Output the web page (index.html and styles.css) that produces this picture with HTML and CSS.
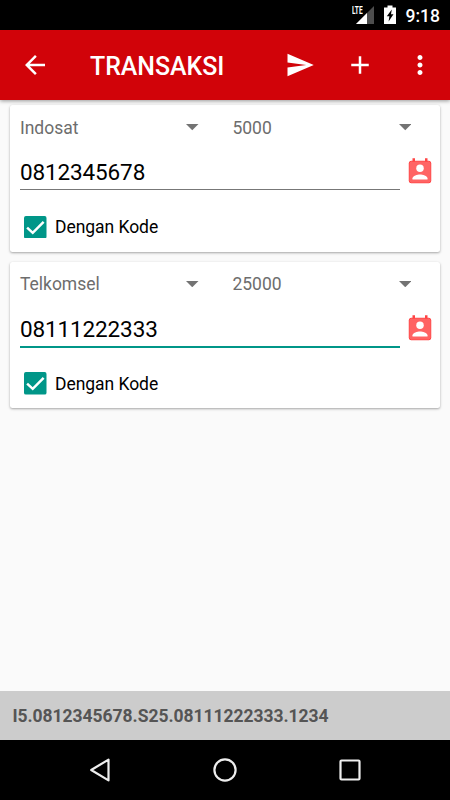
FILE: index.html
```html
<!DOCTYPE html>
<html lang="id">
<head>
<meta charset="utf-8">
<title>Transaksi</title>
<link rel="stylesheet" href="styles.css">
</head>
<body>
<div class="screen">
  <div class="status">
    <svg class="signal" width="24" height="20" viewBox="0 0 24 20"><path d="M22 1V19H4z" fill="#4d4d4d"/><path d="M15 8V19H4z" fill="#fff"/></svg>
    <span class="lte">LTE</span>
    <svg class="battery" width="12" height="19" viewBox="0 0 12 19"><path d="M3.5 0.500h5v2H12v16.500H0V2.500h3.500z" fill="#fff"/><path d="M7.800 4.500L2.800 11.300H5.400L4.600 16.500L9.500 9.300H7z" fill="#000"/></svg>
    <span class="time">9:18</span>
  </div>
  <header class="appbar">
    <svg class="icon" viewBox="0 0 24 24"><path d="M20 11H7.830l5.590-5.590L12 4l-8 8 8 8 1.410-1.410L7.830 13H20v-2z"/></svg>
    <h1 class="title">TRANSAKSI</h1>
    <div class="actions">
      <svg class="icon" viewBox="0 0 24 24"><path d="M2.010 21L23 12 2.010 3 2 10l15 2-15 2z"/></svg>
      <svg class="icon" viewBox="0 0 24 24"><path d="M19 13h-6v6h-2v-6H5v-2h6V5h2v6h6v2z"/></svg>
      <svg class="icon" viewBox="0 0 24 24"><path d="M12 8c1.100 0 2-.9 2-2s-.9-2-2-2-2 .9-2 2 .9 2 2 2zm0 2c-1.100 0-2 .9-2 2s.9 2 2 2 2-.9 2-2-.9-2-2-2zm0 6c-1.100 0-2 .9-2 2s.9 2 2 2 2-.9 2-2-.9-2-2-2z"/></svg>
    </div>
  </header>
  <main class="content">
    <section class="card">
      <div class="selects">
        <div class="select"><span>Indosat</span><svg class="caret" viewBox="0 0 12.500 6.250"><path d="M0 0h12.500L6.250 6.250z"/></svg></div>
        <div class="select"><span>5000</span><svg class="caret" viewBox="0 0 12.500 6.250"><path d="M0 0h12.500L6.250 6.250z"/></svg></div>
      </div>
      <div class="phone">
        <div class="field">0812345678</div>
        <svg class="contact" viewBox="0 0 24 24"><path class="tabs" d="M6 1h2v3H6zM16 1h2v3h-2z"/><rect class="page" x="3.400" y="3.400" width="17.200" height="17.200" rx="1.500"/><circle cx="12" cy="9" r="3"/><path d="M18 18H6v-1c0-2 4-3.100 6-3.100s6 1.100 6 3.100z"/></svg>
      </div>
      <div class="check"><svg class="box" viewBox="0 0 18 18"><rect width="18" height="18" rx="1.500"/><path d="M2.500 9.300L7 13.500 15.700 4.700"/></svg><span>Dengan Kode</span></div>
    </section>
    <section class="card focused">
      <div class="selects">
        <div class="select"><span>Telkomsel</span><svg class="caret" viewBox="0 0 12.500 6.250"><path d="M0 0h12.500L6.250 6.250z"/></svg></div>
        <div class="select"><span>25000</span><svg class="caret" viewBox="0 0 12.500 6.250"><path d="M0 0h12.500L6.250 6.250z"/></svg></div>
      </div>
      <div class="phone">
        <div class="field">08111222333</div>
        <svg class="contact" viewBox="0 0 24 24"><path class="tabs" d="M6 1h2v3H6zM16 1h2v3h-2z"/><rect class="page" x="3.400" y="3.400" width="17.200" height="17.200" rx="1.500"/><circle cx="12" cy="9" r="3"/><path d="M18 18H6v-1c0-2 4-3.100 6-3.100s6 1.100 6 3.100z"/></svg>
      </div>
      <div class="check"><svg class="box" viewBox="0 0 18 18"><rect width="18" height="18" rx="1.500"/><path d="M2.500 9.300L7 13.500 15.700 4.700"/></svg><span>Dengan Kode</span></div>
    </section>
  </main>
  <div class="preview">I5.0812345678.S25.08111222333.1234</div>
  <nav class="navbar">
    <svg viewBox="0 0 30 30"><path d="M23.500 4.600v20.800L6.200 15z"/></svg>
    <svg viewBox="0 0 30 30"><circle cx="15" cy="15" r="10.600"/></svg>
    <svg viewBox="0 0 30 30"><rect x="5.500" y="5.500" width="19" height="19" rx="1"/></svg>
  </nav>
</div>
</body>
</html>
```
FILE: styles.css
```css
* { box-sizing: border-box; }
body { margin: 0; font-family: Roboto, "Liberation Sans", sans-serif; }
svg { display: block; flex: none; }
.screen { width: 450px; height: 800px; display: flex; flex-direction: column; background: #fafafa; overflow: hidden; }
.status { height: 30px; flex: none; background: #000; color: #fff; display: flex; justify-content: flex-end; padding-right: 10px; position: relative; }
.signal { margin: 5px 8px 0 0; }
.lte { position: absolute; left: 352px; top: 5px; font: 700 11px/11px Roboto, sans-serif; transform: scaleX(.6); transform-origin: left; }
.battery { margin: 5px 10px 0 0; }
.time { font-size: 17.500px; font-weight: 500; line-height: 32px; }
.appbar { height: 70px; flex: none; background: #d10309; color: #fff; display: flex; align-items: center; padding: 0 15px 0 20px; box-shadow: 0 1px 4px rgba(0,0,0,.4); position: relative; }
.icon { width: 30px; height: 30px; fill: #fff; }
.title { margin: 3px 0 0 40px; font-size: 24.900px; font-weight: 500; line-height: 30px; }
.actions { display: flex; gap: 30px; margin-left: auto; }
.content { flex: 1; padding: 5px 10px 0; display: flex; flex-direction: column; gap: 10px; }
.card { height: 146.500px; background: #fff; border-radius: 2.500px; box-shadow: 0 1px 2.500px rgba(0,0,0,.35); padding: 10px 5px 0 10px; }
.selects { display: grid; grid-template-columns: 212.500px 212.500px; height: 25px; }
.select { display: flex; align-items: center; justify-content: space-between; padding-right: 34px; font-size: 17.500px; letter-spacing: -.03px; color: #6d6d6d; }
.caret { width: 12.500px; height: 6.250px; fill: #737373; }
.phone { display: flex; gap: 5px; margin-top: 17px; height: 33px; }
.field { flex: none; width: 380px; border-bottom: 1px solid #777; font-size: 22.500px; letter-spacing: -.13px; line-height: 31px; height: 33px; color: #000; }
.focused .field { border-bottom: 2px solid #009688; height: 34px; }
.contact { width: 30px; height: 30px; fill: #fff; }
.tabs { fill: #f44; }
.page { fill: #ff6464; stroke: #ff4444; stroke-width: .8; }
.check { display: flex; align-items: center; gap: 8.500px; margin: 26px 0 0 4px; height: 22px; font-size: 17.500px; letter-spacing: -.05px; color: #000; }
.box { width: 22.500px; height: 22.500px; fill: #009688; }
.box path { fill: none; stroke: #fff; stroke-width: 2; }
.preview { height: 49px; flex: none; background: #ccc; color: #555; padding-left: 12.500px; font-size: 17.500px; letter-spacing: -.04px; line-height: 51px; font-weight: 700; }
.navbar { height: 60px; flex: none; background: #000; display: flex; justify-content: center; align-items: center; gap: 95px; }
.navbar svg { width: 30px; height: 30px; fill: none; stroke: #eee; stroke-width: 2.200; stroke-linejoin: round; }
```
